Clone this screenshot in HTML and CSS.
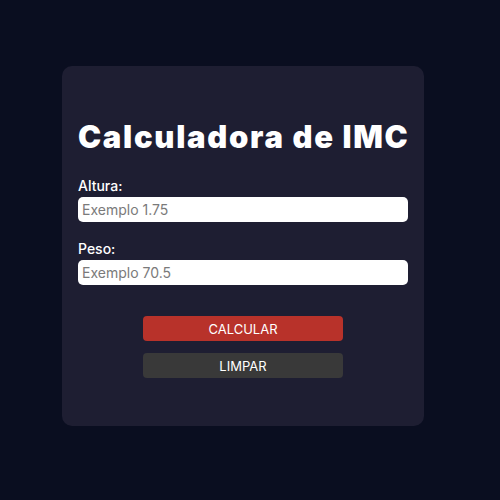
FILE: index.html
```html
<!DOCTYPE html>
<html lang="pt">
<head>
<meta charset="utf-8">
<title>Calculadora de IMC</title>
<link rel="stylesheet" href="styles.css">
</head>
<body>
<div class="page">
  <main class="card">
    <h1 class="title">Calculadora de IMC</h1>
    <label class="label" for="altura">Altura:</label>
    <input class="field" id="altura" type="text" placeholder="Exemplo 1.75">
    <label class="label label-second" for="peso">Peso:</label>
    <input class="field" id="peso" type="text" placeholder="Exemplo 70.5">
    <div class="actions">
      <button class="btn btn-calc" type="button">CALCULAR</button>
      <button class="btn btn-clear" type="button">LIMPAR</button>
    </div>
  </main>
</div>
</body>
</html>
```

FILE: styles.css
```css
html, body {
  margin: 0;
  padding: 0;
  background: #0a0e20;
  font-family: Inter, "Liberation Sans", sans-serif;
}

.page {
  padding: 66px 0 0 62px;
}

.card {
  box-sizing: border-box;
  width: 362px;
  height: 360px;
  background: #1e1e32;
  border-radius: 10px;
  padding: 53px 16px 0;
  display: flex;
  flex-direction: column;
}

.title {
  margin: 0;
  font-size: 31px;
  line-height: 36px;
  font-weight: 900;
  letter-spacing: 1.7px;
  color: #ffffff;
  white-space: nowrap;
}

.label {
  margin-top: 22px;
  font-size: 14px;
  line-height: 18px;
  font-weight: 500;
  color: #ffffff;
}

.label-second {
  margin-top: 18px;
}

.field {
  box-sizing: border-box;
  margin-top: 2px;
  width: 330px;
  height: 25px;
  border: none;
  border-radius: 5px;
  padding: 0 4px;
  font-family: inherit;
  font-size: 14px;
  background: #ffffff;
  color: #222;
  outline: none;
}

.field::placeholder {
  color: #7a7a7a;
}

.actions {
  margin-top: 31px;
  display: flex;
  flex-direction: column;
  align-items: center;
  gap: 12px;
}

.btn {
  width: 200px;
  height: 25px;
  border: none;
  border-radius: 4px;
  font-family: inherit;
  font-size: 13px;
  font-weight: 400;
  color: #ffffff;
  padding: 0;
}

.btn-calc {
  background: #b8322a;
}

.btn-clear {
  background: #393939;
}
```
